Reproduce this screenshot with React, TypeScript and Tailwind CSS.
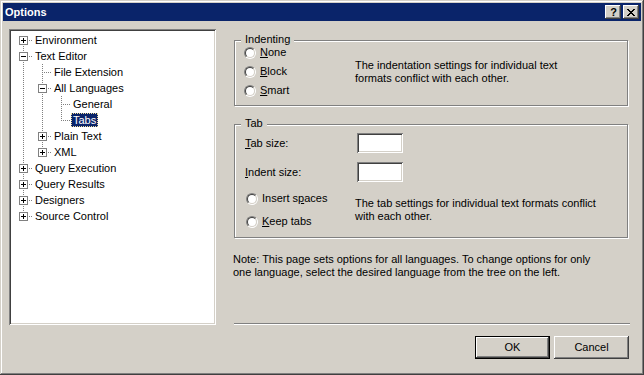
import React from "react";

const raised =
  "shadow-[inset_-1px_-1px_0_#404040,inset_1px_1px_0_#ffffff,inset_-2px_-2px_0_#808080,inset_2px_2px_0_#d4d0c8]";
const sunken =
  "shadow-[inset_1px_1px_0_#808080,inset_-1px_-1px_0_#ffffff,inset_2px_2px_0_#404040,inset_-2px_-2px_0_#d4d0c8]";

type Cell = { k: "pipe" | "tee" | "elbow" | "plus" | "minus"; t?: boolean; b?: boolean };
type Row = { cells: Cell[]; label: string; selected?: boolean };

const rows: Row[] = [
  { cells: [{ k: "plus", t: false, b: true }], label: "Environment" },
  { cells: [{ k: "minus", t: true, b: true }], label: "Text Editor" },
  { cells: [{ k: "pipe" }, { k: "tee" }], label: "File Extension" },
  { cells: [{ k: "pipe" }, { k: "minus", t: true, b: true }], label: "All Languages" },
  { cells: [{ k: "pipe" }, { k: "pipe" }, { k: "tee" }], label: "General" },
  { cells: [{ k: "pipe" }, { k: "pipe" }, { k: "elbow" }], label: "Tabs", selected: true },
  { cells: [{ k: "pipe" }, { k: "plus", t: true, b: true }], label: "Plain Text" },
  { cells: [{ k: "pipe" }, { k: "plus", t: true, b: false }], label: "XML" },
  { cells: [{ k: "plus", t: true, b: true }], label: "Query Execution" },
  { cells: [{ k: "plus", t: true, b: true }], label: "Query Results" },
  { cells: [{ k: "plus", t: true, b: true }], label: "Designers" },
  { cells: [{ k: "plus", t: true, b: false }], label: "Source Control" },
];

function TreeCell({ c }: { c: Cell }) {
  const dot = { stroke: "#808080", strokeDasharray: "1 1", strokeWidth: 1 };
  const isBox = c.k === "plus" || c.k === "minus";
  return (
    <svg width="19" height="16" viewBox="0 0 19 16" shapeRendering="crispEdges" className="shrink-0 block">
      {c.k === "pipe" || c.k === "tee" ? <line x1="9.5" y1="0" x2="9.5" y2="16" {...dot} /> : null}
      {c.k === "elbow" ? <line x1="9.5" y1="0" x2="9.5" y2="9" {...dot} /> : null}
      {c.k === "tee" || c.k === "elbow" ? <line x1="11" y1="8.5" x2="19" y2="8.5" {...dot} /> : null}
      {isBox && c.t ? <line x1="9.5" y1="0" x2="9.5" y2="5" {...dot} /> : null}
      {isBox && c.b ? <line x1="9.5" y1="12" x2="9.5" y2="16" {...dot} /> : null}
      {isBox ? (
        <>
          <line x1="15" y1="8.5" x2="19" y2="8.5" {...dot} />
          <rect x="5.5" y="4.5" width="8" height="8" fill="#ffffff" stroke="#808080" />
          <line x1="7" y1="8.5" x2="12" y2="8.5" stroke="#000" />
          {c.k === "plus" ? <line x1="9.5" y1="6" x2="9.5" y2="11" stroke="#000" /> : null}
        </>
      ) : null}
    </svg>
  );
}

function Radio() {
  return (
    <span className="inline-block shrink-0 w-[12px] h-[12px] rounded-full border border-t-[#808080] border-l-[#808080] border-b-white border-r-white">
      <span className="block w-full h-full rounded-full border border-t-[#404040] border-l-[#404040] border-b-[#d4d0c8] border-r-[#d4d0c8] bg-white" />
    </span>
  );
}

function CloseGlyph() {
  const px: [number, number, number][] = [
    [0, 0, 2], [6, 0, 2],
    [1, 1, 2], [5, 1, 2],
    [2, 2, 4],
    [3, 3, 2],
    [2, 4, 4],
    [1, 5, 2], [5, 5, 2],
    [0, 6, 2], [6, 6, 2],
  ];
  return (
    <svg width="8" height="7" viewBox="0 0 8 7" shapeRendering="crispEdges" className="block">
      {px.map(([x, y, w], i) => (
        <rect key={i} x={x} y={y} width={w} height={1} fill="#000" />
      ))}
    </svg>
  );
}

function GroupLabel({ children }: { children: React.ReactNode }) {
  return (
    <span className="absolute left-[6px] top-[-8px] px-[4px] bg-[#d4d0c8] leading-[13px]">{children}</span>
  );
}

export default function App() {
  return (
    <div className="w-[644px] h-[375px] bg-[#d4d0c8] p-[3px] flex flex-col font-['Liberation_Sans',Arial,sans-serif] text-[11px] leading-[13px] text-black shadow-[inset_-1px_-1px_0_#404040,inset_1px_1px_0_#d4d0c8,inset_-2px_-2px_0_#808080,inset_2px_2px_0_#ffffff]">
      {/* Title bar */}
      <div className="h-[18px] shrink-0 bg-[#0a246a] flex items-center justify-between pl-[2px] pr-[2px]">
        <span className="text-white font-bold">Options</span>
        <div className="flex gap-[2px]">
          <div className={`w-[16px] h-[14px] bg-[#d4d0c8] flex items-center justify-center font-bold text-[11px] leading-[11px] pl-[1px] ${raised}`}>
            ?
          </div>
          <div className={`w-[16px] h-[14px] bg-[#d4d0c8] flex items-center justify-center ${raised}`}>
            <CloseGlyph />
          </div>
        </div>
      </div>

      {/* Body */}
      <div className="flex pl-[6px] pt-[8px]">
        {/* Tree */}
        <div className={`w-[207px] h-[296px] shrink-0 bg-white pl-[5px] pt-[3px] ${sunken}`}>
          {rows.map((r, i) => (
            <div key={i} className="h-[16px] flex items-center">
              {r.cells.map((c, j) => (
                <TreeCell key={j} c={c} />
              ))}
              <span
                className={
                  r.selected
                    ? "h-[14px] flex items-center px-[1px] border border-dotted border-[#f0dc9a] bg-[#0a246a] text-white whitespace-nowrap"
                    : "h-[14px] flex items-center px-[1px] border border-transparent whitespace-nowrap"
                }
              >
                {r.label}
              </span>
            </div>
          ))}
        </div>

        {/* Right column */}
        <div className="ml-[18px] w-[396px] flex flex-col">
          {/* Indenting */}
          <div className="relative mt-[11px] w-[394px] h-[66px] border border-[#808080] shadow-[inset_1px_1px_0_#ffffff,1px_1px_0_#ffffff]">
            <GroupLabel>Indenting</GroupLabel>
            <div className="flex items-center pt-[2px] pl-[9px]">
              <div className="w-[111px] flex flex-col">
                <div className="h-[19px] flex items-center gap-[4px]">
                  <Radio />
                  <span>
                    <span className="underline">N</span>one
                  </span>
                </div>
                <div className="h-[19px] flex items-center gap-[4px]">
                  <Radio />
                  <span>
                    <span className="underline">B</span>lock
                  </span>
                </div>
                <div className="h-[19px] flex items-center gap-[4px]">
                  <Radio />
                  <span>
                    <span className="underline">S</span>mart
                  </span>
                </div>
              </div>
              <div className="whitespace-nowrap">
                The indentation settings for individual text
                <br />
                formats conflict with each other.
              </div>
            </div>
          </div>

          {/* Tab */}
          <div className="relative mt-[18px] w-[394px] h-[114px] border border-[#808080] shadow-[inset_1px_1px_0_#ffffff,1px_1px_0_#ffffff]">
            <GroupLabel>Tab</GroupLabel>
            <div className="flex flex-col pt-[8px] pl-[10px]">
              <div className="h-[20px] flex items-center">
                <span className="w-[112px]">
                  <span className="underline">T</span>ab size:
                </span>
                <div className={`w-[46px] h-[20px] bg-white ${sunken}`} />
              </div>
              <div className="mt-[9px] h-[20px] flex items-center">
                <span className="w-[112px]">
                  <span className="underline">I</span>ndent size:
                </span>
                <div className={`w-[46px] h-[20px] bg-white ${sunken}`} />
              </div>
              <div className="mt-[5px] flex items-center">
                <div className="w-[110px] flex flex-col">
                  <div className="h-[23px] flex items-center gap-[4px] pl-[1px]">
                    <Radio />
                    <span>
                      Insert s<span className="underline">p</span>aces
                    </span>
                  </div>
                  <div className="h-[23px] flex items-center gap-[4px] pl-[1px]">
                    <Radio />
                    <span>
                      <span className="underline">K</span>eep tabs
                    </span>
                  </div>
                </div>
                <div className="whitespace-nowrap">
                  The tab settings for individual text formats conflict
                  <br />
                  with each other.
                </div>
              </div>
            </div>
          </div>

          {/* Note */}
          <div className="mt-[15px] -ml-[1px] whitespace-nowrap">
            Note: This page sets options for all languages. To change options for only
            <br />
            one language, select the desired language from the tree on the left.
          </div>

          {/* Separator */}
          <div className="mt-[44px] w-[396px] h-[2px] border-t border-t-[#808080] border-b border-b-white" />

          {/* Buttons */}
          <div className="mt-[11px] flex justify-end gap-[4px] pr-[1px]">
            <div className={`w-[75px] h-[23px] border border-black bg-[#d4d0c8] flex items-center justify-center ${raised}`}>
              OK
            </div>
            <div className={`w-[75px] h-[23px] bg-[#d4d0c8] flex items-center justify-center ${raised}`}>
              Cancel
            </div>
          </div>
        </div>
      </div>
    </div>
  );
}
